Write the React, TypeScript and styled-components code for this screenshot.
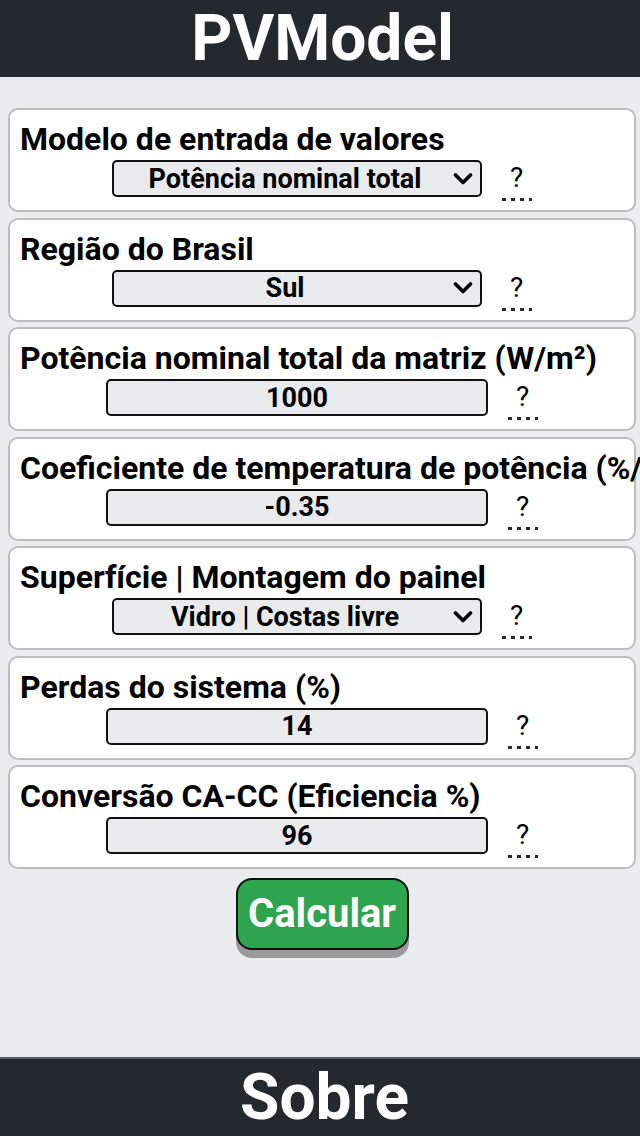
import React from "react";
import styled, { createGlobalStyle } from "styled-components";

const Global = createGlobalStyle`
  html, body { margin: 0; padding: 0; }
  body {
    background: #ebecee;
    font-family: Roboto, "Liberation Sans", Arial, sans-serif;
    overflow-x: hidden;
  }
  * { box-sizing: border-box; }
`;

const Page = styled.div`
  min-height: 100vh;
  display: flex;
  flex-direction: column;
`;

const Header = styled.header`
  height: 77px;
  background: #24292e;
  color: #fff;
  display: flex;
  align-items: center;
  justify-content: center;
  padding-left: 5px;
  font-weight: 700;
  font-size: 64px;
  line-height: 1;
`;

const Main = styled.main`
  flex: 1;
  padding: 31px 4px 0 8px;
  display: flex;
  flex-direction: column;
  gap: 5.5px;
`;

const Card = styled.section`
  background: #fff;
  border: 2px solid #bdbdbd;
  border-radius: 10px;
  padding: 11px 10px 0;
  height: 104px;
`;

const Title = styled.div`
  font-size: 32px;
  font-weight: 700;
  color: #000;
  white-space: nowrap;
  line-height: 36px;
`;

const Row = styled.div`
  display: flex;
  justify-content: center;
  align-items: flex-start;
  gap: 19px;
  margin-top: 3px;
`;

const Select = styled.div`
  width: 370px;
  height: 37px;
  border: 2px solid #111;
  border-radius: 5px;
  background: #e9eaec;
  display: flex;
  align-items: center;
  justify-content: center;
  position: relative;
  font-size: 27px;
  font-weight: 700;
  color: #000;
  padding-right: 24px;
`;

const Chevron = styled.svg`
  position: absolute;
  right: 7px;
  top: 50%;
  transform: translateY(-50%);
`;

const Input = styled.div`
  width: 382px;
  height: 37px;
  border: 2px solid #111;
  border-radius: 5px;
  background: #e9eaec;
  display: flex;
  align-items: center;
  justify-content: center;
  font-size: 27px;
  font-weight: 700;
  color: #000;
`;

const Help = styled.abbr`
  display: block;
  width: 31px;
  height: 41px;
  text-align: center;
  font-size: 28px;
  line-height: 30px;
  padding-top: 3px;
  text-decoration: none;
  color: #000;
  cursor: help;
  background-image: linear-gradient(to right, #2a2a2a 0 4px, transparent 4px 9px);
  background-size: 9px 3px;
  background-repeat: repeat-x;
  background-position: 1px bottom;
`;

const Actions = styled.div`
  display: flex;
  justify-content: center;
  margin-top: 3px;
`;

const Button = styled.button`
  width: 173px;
  height: 72px;
  background: #2ea44f;
  color: #fff;
  border: 2px solid #111;
  border-radius: 16px;
  font-family: Roboto, "Liberation Sans", Arial, sans-serif;
  font-weight: 700;
  font-size: 40px;
  box-shadow: 0 8px 0 #9a9a9a;
  cursor: pointer;
  padding: 0;
`;

const Footer = styled.footer`
  height: 79px;
  background: #24292e;
  border-top: 2px solid #5a5f63;
  color: #fff;
  display: flex;
  align-items: center;
  justify-content: center;
  padding-left: 9px;
  font-weight: 700;
  font-size: 64px;
  line-height: 1;
`;

type Field = { title: string; value: string; kind: "select" | "input" };

const fields: Field[] = [
  { title: "Modelo de entrada de valores", value: "Potência nominal total", kind: "select" },
  { title: "Região do Brasil", value: "Sul", kind: "select" },
  { title: "Potência nominal total da matriz (W/m²)", value: "1000", kind: "input" },
  { title: "Coeficiente de temperatura de potência (%/°C)", value: "-0.35", kind: "input" },
  { title: "Superfície | Montagem do painel", value: "Vidro | Costas livre", kind: "select" },
  { title: "Perdas do sistema (%)", value: "14", kind: "input" },
  { title: "Conversão CA-CC (Eficiencia %)", value: "96", kind: "input" },
];

export default function App() {
  return (
    <Page>
      <Global />
      <Header>PVModel</Header>
      <Main>
        {fields.map((f) => (
          <Card key={f.title}>
            <Title>{f.title}</Title>
            <Row>
              {f.kind === "select" ? (
                <Select>
                  {f.value}
                  <Chevron width="20" height="13" viewBox="0 0 20 13">
                    <path d="M2.5 2.5 L10 10 L17.5 2.5" fill="none" stroke="#000" strokeWidth="3.6" strokeLinecap="round" strokeLinejoin="round" />
                  </Chevron>
                </Select>
              ) : (
                <Input>{f.value}</Input>
              )}
              <Help title="Ajuda">?</Help>
            </Row>
          </Card>
        ))}
        <Actions>
          <Button>Calcular</Button>
        </Actions>
      </Main>
      <Footer>Sobre</Footer>
    </Page>
  );
}
